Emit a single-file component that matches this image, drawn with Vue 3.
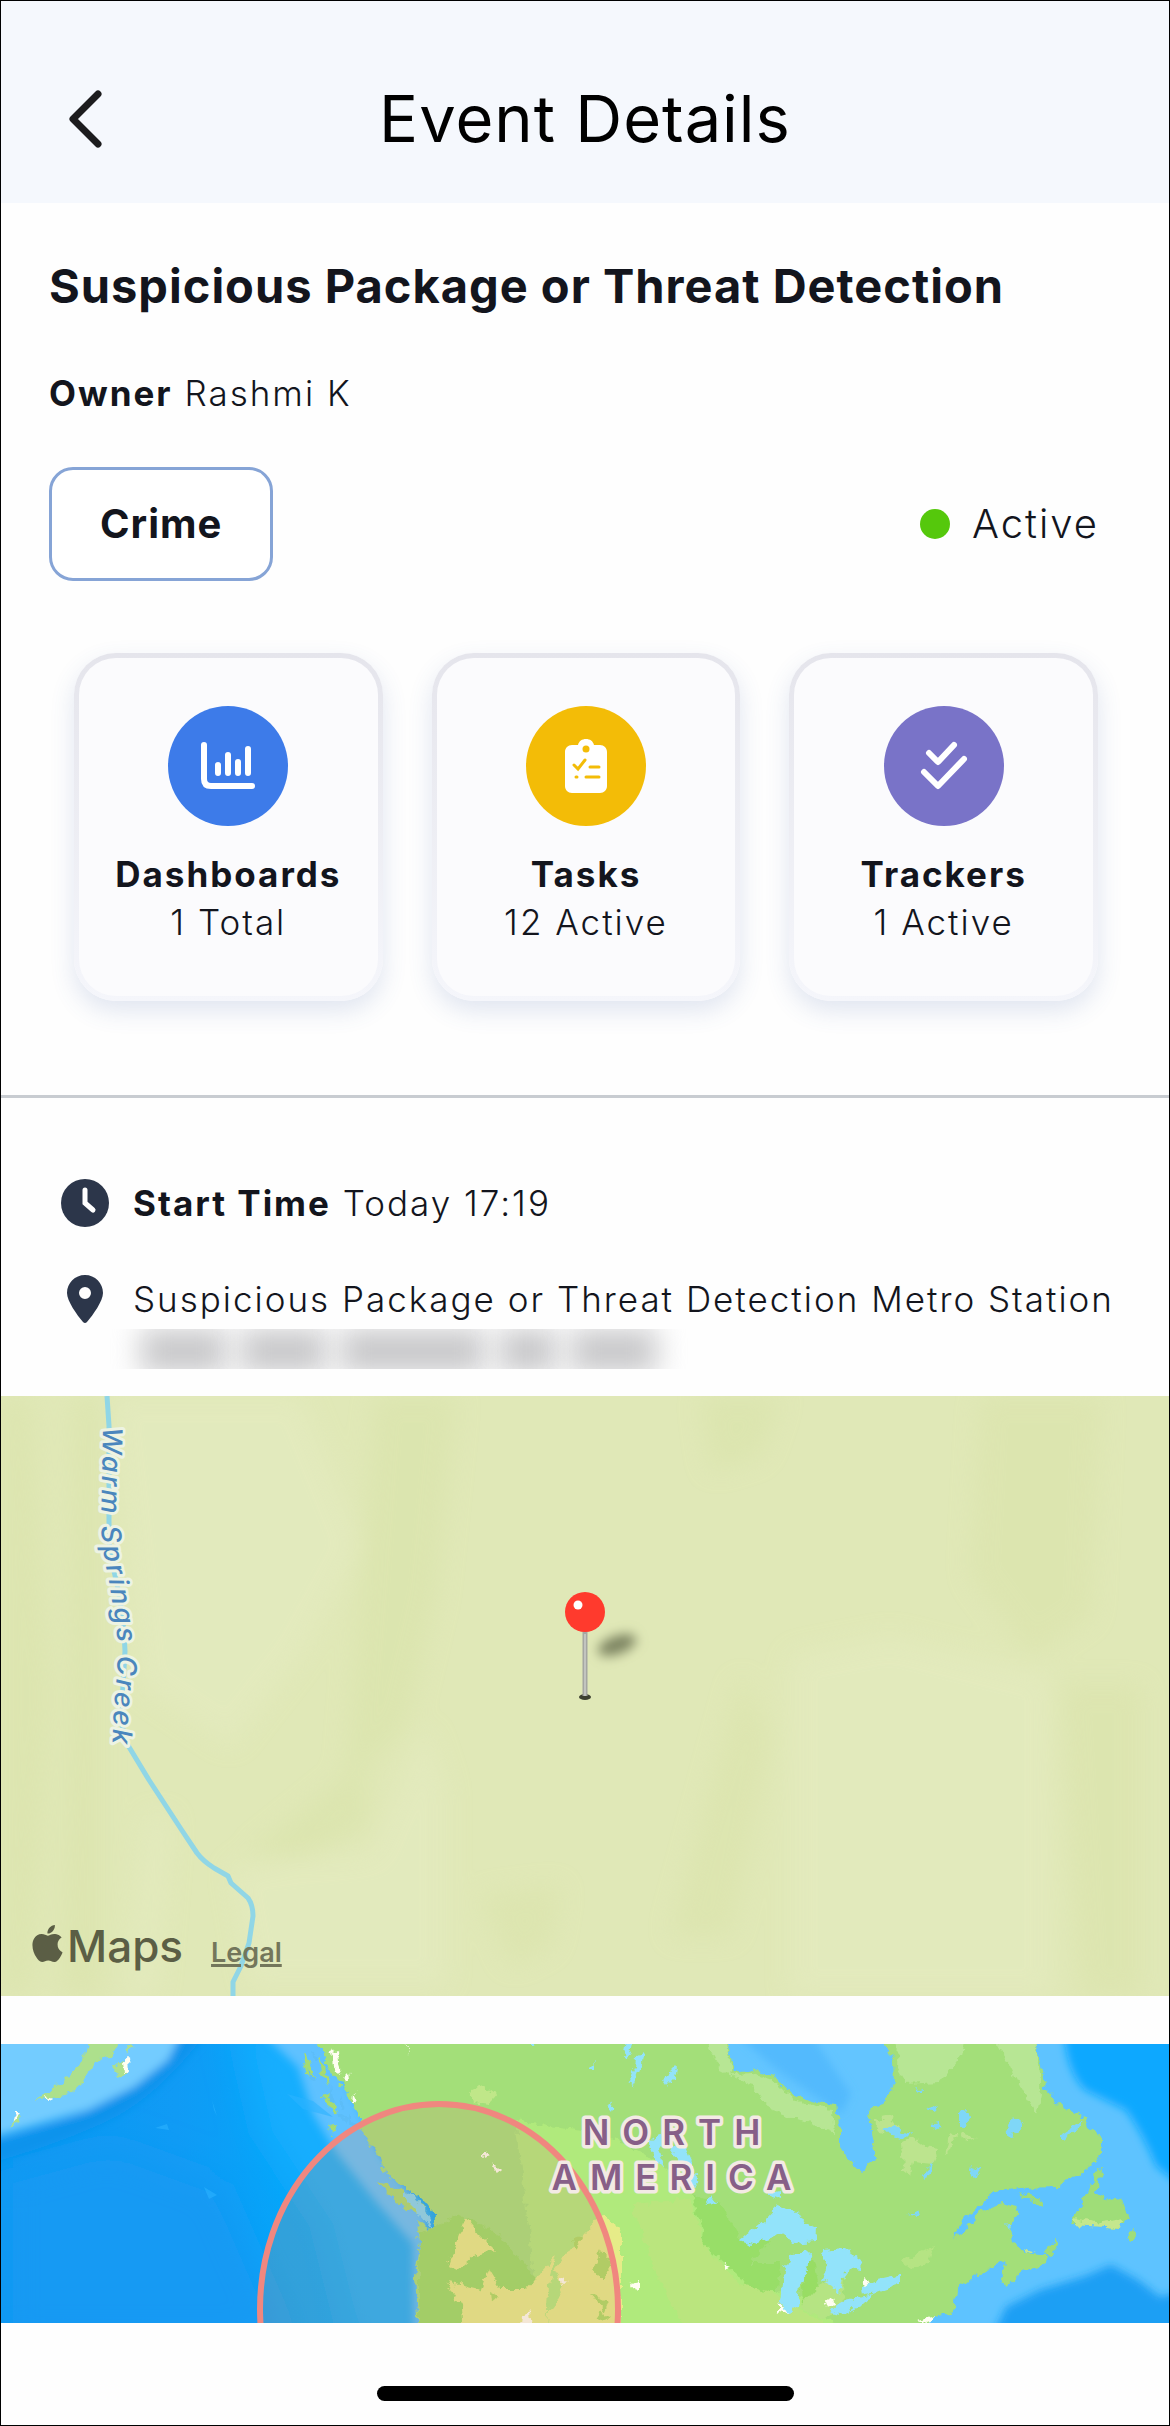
<script setup>
import { ref } from 'vue';

// Event data shown on the page
const event = ref({
  title: 'Suspicious Package or Threat Detection',
  owner: 'Rashmi K',
  category: 'Crime',
  status: 'Active',
  startTime: 'Today 17:19',
  place: 'Suspicious Package or Threat Detection Metro Station',
});

const cards = ref([
  { id: 'dashboards', label: 'Dashboards', count: '1 Total' },
  { id: 'tasks', label: 'Tasks', count: '12 Active' },
  { id: 'trackers', label: 'Trackers', count: '1 Active' },
]);
</script>

<template>
  <div class="page">
    <header class="header">
      <button class="back" type="button" aria-label="Back">
        <svg viewBox="0 0 36 60" width="36" height="60">
          <path d="M31 5 6 30l25 25" />
        </svg>
      </button>
      <h1>Event Details</h1>
    </header>

    <section class="summary">
      <h2>{{ event.title }}</h2>
      <p class="owner"><b>Owner</b> {{ event.owner }}</p>
      <div class="tags">
        <span class="category">{{ event.category }}</span>
        <span class="status"><i class="dot"></i>{{ event.status }}</span>
      </div>
    </section>

    <nav class="cards">
      <button v-for="card in cards" :key="card.id" type="button" class="card">
        <span class="card-icon" :class="card.id">
          <svg v-if="card.id === 'dashboards'" viewBox="0 0 120 120">
            <path class="line" d="M36 39v34q0 7 7 7h41M50 59v8M60 49v18M70 56v11M80 43v24" />
          </svg>
          <svg v-else-if="card.id === 'tasks'" viewBox="0 0 120 120">
            <path
              class="fill"
              d="M46 39h6c1-4 4-6 8-6s7 2 8 6h6c4 0 7 3 7 7v34c0 4-3 7-7 7H46c-4 0-7-3-7-7V46c0-4 3-7 7-7z"
            />
            <circle class="hole" cx="60" cy="43" r="3.5" />
            <path class="cut" d="m48 59 4 4 7-9M64 61h9M60 71h13M50 71h1" />
          </svg>
          <svg v-else viewBox="0 0 120 120">
            <path class="line" d="m45 47 9 9 16-17M40 66l14 14 26-27" />
          </svg>
        </span>
        <b>{{ card.label }}</b>
        <span>{{ card.count }}</span>
      </button>
    </nav>

    <section class="details">
      <div class="row">
        <svg viewBox="0 0 48 48" width="48" height="48">
          <circle cx="24" cy="24" r="24" fill="#2c364a" />
          <path d="M24 11v13l8 7" fill="none" stroke="#fff" stroke-width="5" stroke-linecap="round" />
        </svg>
        <p><b>Start Time</b> {{ event.startTime }}</p>
      </div>
      <div class="row">
        <svg viewBox="0 0 48 48" width="48" height="48">
          <path
            fill="#2c364a"
            fill-rule="evenodd"
            d="M24 0c10 0 18 8 18 18 0 8-10 22-16 29q-2 2-4 0C16 40 6 26 6 18 6 8 14 0 24 0zm0 12a6 6 0 1 0 0 12 6 6 0 0 0 0-12z"
          />
        </svg>
        <p>{{ event.place }}</p>
      </div>
      <!-- address is hidden -->
      <div class="redacted"><i></i><i></i><i></i><i></i><i></i></div>
    </section>

    <div class="map local-map">
      <svg viewBox="0 0 1168 600" preserveAspectRatio="xMidYMid slice">
        <defs>
          <filter id="soft" x="-50%" y="-50%" width="200%" height="200%">
            <feGaussianBlur stdDeviation="12" />
          </filter>
          <filter id="shade" x="-100%" y="-200%" width="300%" height="500%">
            <feGaussianBlur stdDeviation="6" />
          </filter>
        </defs>
        <rect width="1168" height="600" fill="#e0e8b7" />
        <g filter="url(#soft)" opacity=".7">
          <path fill="#dbe4ad" d="M0 0h30l20 300-20 300H0zM75 0h25v600H60z" />
          <path fill="#e4ebc0" d="M110 0h190l60 150-60 110-70 90-90-60zM145 420h25l-15 180h-28z" />
          <path fill="#dae4ac" d="M375 0h80l-20 200-30 130-40 40v60l-60 30-60 0 100-80zM700 0h80l-20 60-50 15z" />
          <path fill="#e4ebc0" d="M425 330l20 60v200H250l-20-120 140-15z" />
          <path fill="#e4ebbf" d="M790 260l100-20 160 40v320H790z" />
          <path fill="#dbe4ad" d="M980 0h120l-10 220-60 40-60-80zM740 280l30 60-40 200h-60zM1060 290h80v310h-60z" />
          <path fill="#dbe4ad" d="M480 500l80-10-10 60-40 20z" />
        </g>
        <path
          class="creek"
          d="M106 0l2 30v100q-1 20 5 45 10 40 11 80l-4 70 5 21 23 38 32 49 16 24q6 8 17 15l14 8 3 7 17 15q5 7 5 18l-4 27-8 23-8 16v14"
        />
        <path id="creek-label" d="M102 31L100 128Q101 155 108 185L116 238Q118 262 113 310L111 360" fill="none" />
        <text class="creek-name">
          <textPath href="#creek-label">Warm Springs Creek</textPath>
        </text>
        <ellipse cx="616" cy="249" rx="20" ry="9" fill="#7c8360" filter="url(#shade)" transform="rotate(-20 616 249)" />
        <ellipse cx="584" cy="301" rx="6" ry="3" fill="#3c4030" />
        <path d="M584 232v68" stroke="#a5a7a2" stroke-width="5" />
        <path d="M584 238v62" stroke="#c2c4bf" stroke-width="2" />
        <circle cx="584" cy="216" r="20" fill="#ff3a2d" />
        <circle cx="577" cy="209" r="4.5" fill="#fff" />
      </svg>
      <div class="attribution">
        <svg viewBox="2 0 20 24" width="31" height="37">
          <path
            d="M12.152 6.896c-.948 0-2.415-1.078-3.96-1.04-2.04.027-3.91 1.183-4.961 3.014-2.117 3.675-.546 9.103 1.519 12.09 1.013 1.454 2.208 3.09 3.792 3.039 1.52-.065 2.09-.987 3.935-.987 1.831 0 2.35.987 3.96.948 1.637-.026 2.676-1.48 3.676-2.948 1.156-1.688 1.636-3.325 1.662-3.415-.039-.013-3.182-1.221-3.22-4.857-.026-3.04 2.48-4.494 2.597-4.559-1.429-2.09-3.623-2.324-4.39-2.376-2-.156-3.675 1.09-4.61 1.09zM15.53 3.83c.843-1.012 1.4-2.427 1.245-3.83-1.207.052-2.662.805-3.532 1.818-.78.896-1.454 2.338-1.273 3.714 1.338.104 2.715-.688 3.559-1.701"
          />
        </svg>
        <span class="maps">Maps</span>
        <a href="#legal">Legal</a>
      </div>
    </div>

    <div class="map world-map">
      <svg viewBox="0 0 1168 279" preserveAspectRatio="xMidYMid slice">
        <defs>
          <linearGradient id="ocean">
            <stop offset="0" stop-color="#0a98f2" />
            <stop offset=".15" stop-color="#109bf5" />
            <stop offset=".24" stop-color="#06a4f9" />
            <stop offset="1" stop-color="#0ea8ff" />
          </linearGradient>
          <filter id="haze" x="-20%" y="-20%" width="140%" height="140%">
            <feGaussianBlur stdDeviation="4" />
          </filter>
          <filter id="deep" x="-20%" y="-20%" width="140%" height="140%">
            <feGaussianBlur stdDeviation="18" />
          </filter>
          <!-- breaks up straight coast lines -->
          <filter id="coast" x="-5%" y="-5%" width="110%" height="110%" color-interpolation-filters="sRGB">
            <feTurbulence type="fractalNoise" baseFrequency=".12" numOctaves="3" seed="4" result="noise" />
            <feDisplacementMap in="SourceGraphic" in2="noise" scale="10" xChannelSelector="R" yChannelSelector="G" />
          </filter>
        </defs>
        <rect width="1168" height="279" fill="url(#ocean)" />

        <!-- sea depth -->
        <g filter="url(#deep)">
          <path fill="#139af3" d="M0 130l110-30 110 40 70 160H0z" />
          <path fill="#17aefe" d="M235-20h90l50 130 60 90 5 100h-90l-30-120-60-90z" />
        </g>
        <g filter="url(#haze)">
          <path fill="none" stroke="#0893ec" stroke-width="18" d="M-10 110q70-20 115-42t90-80" />
          <path fill="#73ccff" d="M-10-10H180L167 16 133 43 87 66-10 94z" />
          <path fill="#5fc1ff" d="M262-10H325L380 110 425 170 424 300H413L412 200 375 158 335 108 312 70 297 23z" />
        </g>
        <path fill="#63c5ff" d="M715-10H910V140H715z" />
        <path fill="#52bafd" d="M735-10H810L850 50 840 70 775 25z" filter="url(#haze)" />
        <path fill="#5ec3ff" d="M920 279V180L1020 120 1020-10H1180V279z" />
        <g filter="url(#haze)">
          <path fill="#11a8ff" d="M1063-10Q1066 28 1084 46L1125 66Q1142 90 1155 122L1190 150V-20z" />
          <path fill="#1a9ff4" d="M990 295L1005 263 1039 246 1085 232 1110 221 1137 236 1159 253 1190 245V300z" />
        </g>
        <path fill="#2cb3ff" opacity=".6" d="M286 50l26 7 20 16-30-8zM213 66l-2-10 5 16zM154 84l14 2-2-6zM208 155l-5-12 13 8zM228 45l-5-6 8 10z" />

        <g filter="url(#coast)">
          <!-- Aleutians -->
          <path fill="#ade08c" d="M87-6H120L110 10 95 19 84 36 72 48 52 53 33 57 52 46 66 33 82 16zM112 24l10-8 4 12-10 6zM10 84l6-12 5 1zM126 3l9 1-8 6z" />
          <!-- mainland -->
          <path
            fill="#a3df79"
            d="M313-10L322 10 330 29 340 40 348 50 352 62 359 73 358 84 368 98 378 113 384 129 405 144 424 158 435 173 433 188 416 177 418 199 414 233 416 259 418 290H925L930 274 954 268 952 259 956 243 979 229 1005 216 1001 230 1005 243 1020 229 1045 219 1047 212 1024 209 1013 199 1011 183 1016 164 1001 158 979 168 964 186 952 195 964 173 986 156 990 148 1020 144 1058 143 1073 133 1092 121 1101 113 1101 93 1088 83 1084 74 1062 63 1043 43 1041 26 1031-10H872L886 3 892 16 893 39 886 56 867 68 869 89 875 116 860 128 850 118 839 101 839 86 835 61 813 59 790 49 775 33 752 26 734 29 728 0V-10z"
          />
          <path fill="#a6dc70" d="M378 137l24 9 20 16 4 9-20-6-20-16zM328 82l8-2 1 8-7 2zM322 52l7-3 6 20-8-5zM300 8l8 8 6 20-9-6zM318 12l6 10 4 20-7-12z" />
          <path fill="#9fdd78" d="M1097 124L1102 126 1095 149 1104 153 1120 155 1127 173 1118 184 1069 180 1080 159 1088 146zM1020 148l20 8 2 6-16-6zM1054 195l3 2-8 14-4-2zM1126 188l8-4 2 8-7 5z" />
          <path fill="#c5e78d" d="M1072 174l28 5 22-3-2 8-48-3zM1022 204l13 4-10 1z" />

          <!-- land tints -->
          <path fill="#b7e694" d="M897-10H965L960 12 940 38 905 40 896 24zM990-10H1033L1038 28 1040 52 1036 70 1018 40 1008 20zM702-10H726L732 31 752 30 775 38 790 53 813 64 832 66 834 90 805 78 770 66 750 40 720 26z" />
          <path fill="#98de68" d="M690 150l30 10 20 35 30 0-20 24 30 0-5 30-37 0-45-35-20-40z" />
          <path fill="#b0ea7c" d="M514 76L560 84 602 90 640 108 665 124 690 146 695 166 703 184 700 198 722 218 736 230 748 248 775 248 790 246 845 290H540z" />
          <path fill="#bae57e" d="M630 160L688 155 700 185V198L738 240 775 250 845 292H690L660 240z" />
          <path fill="#98dd64" d="M418 190l40-20 40 20 50 60-30 45H418zM800 224l12-10 6 28-16 20z" />
          <path fill="#b5e483" d="M900 217l33-15-6 18-24 4zM800 262l11-12 18-20 14 6-2 26-20 14z" />
          <path fill="#bce48e" d="M900 100l12-6 12 10 14 2-6 14-20-2-2 12-8-6zM872 76l18-4 8 10-16 8zM960 88l14 6-10 4zM944 110l5-22 8 4z" />
          <path fill="#c0e789" d="M470 48l14-6 12 8-8 10-16-2z" />

          <!-- drylands -->
          <path fill="#e6ec88" d="M464 173L478 190 494 206 472 212 456 226 448 222 456 196zM446 238L480 246 488 224 500 244 526 244 556 210 548 240 546 295H462L460 262zM568 206L600 172 620 185V295H546L548 266 562 248 554 226z" />
          <path fill="#a9dc62" d="M600 206l10 12-8 20-10-14zM590 250l18 8-4 10zM600 266l10 8-14 4zM488 248l8 4-7 6zM570 196l12-2-6 12z" />

          <!-- lakes -->
          <g fill="#92e3fa">
            <path d="M739 196l25-20 13-14 21 6 4 10 14 6-1 14-24 2-8-12-16 6-16 6z" />
            <path d="M812 208l-22 2-7 17-2 23-2 14 6 6 12-7 2-24 8-17zM820 206l24-2 17 12-1 11-12-2-6 8-3 18-8-10-11-6 6-12z" />
            <path d="M828 268l16-12 26-6-4 8-26 12zM862 242l12-5 25-6v9l-22 8-14 2z" />
            <path d="M647 98l14-10 2 12 20 1 10 22 2 22-6-4-10-24-10-15-12 2 5 20-6-6zM704 162l6-12 7 10zM768 148l10-2v10l-10-4z" />
            <path d="M625-4l6 2-4 18-4-8zM635 12l8-2-3 12-8 20-4-2 6-16zM662 36l14-14-2 12-8 8zM587 26l8-8v8zM606 62l7-4-2 10zM528-2l8 0-4 5z" />
          </g>
          <g fill="#7fd7f7">
            <path d="M883 86l12-6 4 10 14-4-10 10-10-4zM958 70l8-3 4 8-8 10-4-6zM1004 88l8-14 10 4-4 8-12 8zM930 80l8-2 2 6-6 3zM926 64l12-4-4 8zM914 44l8 2-2 4zM920 130l12-12-8 20zM968 122l10 4-4 10zM906 170l10-3 2 4zM1004 178l8 4-4 4z" />
            <path d="M1060 90l22-14-6 12-16 6zM404 148l8 4 12 14 8 20-12-14-16-16z" />
          </g>
          <g fill="#5cbdf8">
            <path d="M330 40l4 20-6-4zM338 50l6 14-4 4zM336 70l12 4-4 6zM346 66l8 18-6-4zM306 24l10 14-6-2zM312 6l6 10-4 2z" />
          </g>
          <g fill="#fffef2">
            <path d="M329 10l7-4 1 12 4 12-6-2zM342 34l6-6 1 8-5 4zM404-4l6 14-5-8zM353 48l3 12-4 2zM121 18l6-4 1 12-6 2zM12 68l8 2-6 6zM44 52l10 2-8 2z" />
            <path d="M484 106l4 6-4 2zM492 118l8 8-4 2-6-6zM520 272l10-4 2 20h-14zM560 234l7 2-8 4zM722 218l8 4-6 4zM824 258l8-3 2 6-8 3zM778 258l8 12-8-2zM862 234l8 4-6 4zM630 240l8-2v8l-6-2zM916 276l18-4-6 8z" />
          </g>
        </g>

        <ellipse class="range" cx="438" cy="265" rx="179" ry="205" />
        <text class="region" x="677" y="101">NORTH</text>
        <text class="region" x="677" y="146">AMERICA</text>
      </svg>
    </div>

    <footer class="footer"><div class="home-bar"></div></footer>
  </div>
</template>

<style>
body {
  margin: 0;
  background: #fff;
}
</style>

<style scoped>
.page {
  box-sizing: border-box;
  min-height: 100vh;
  border: 1px solid #000;
  background: #fefefe;
  color: #13151d;
  font-family: Inter, "Liberation Sans", sans-serif;
  font-size: 35px;
  font-weight: 300;
  line-height: 48px;
  letter-spacing: 2px;
}

h1,
h2,
p {
  margin: 0;
}

b {
  font-weight: 700;
}

button {
  font: inherit;
  color: inherit;
  letter-spacing: inherit;
  cursor: pointer;
}

/*---------------- HEADER ----------- */
.header {
  display: grid;
  grid-template-columns: 140px 1fr 140px;
  align-items: center;
  padding: 78px 0 44px;
  background: #f5f8fd;
}

.back {
  display: flex;
  justify-content: flex-end;
  width: 102px;
  padding: 0;
  border: none;
  background: none;
}

.back path {
  fill: none;
  stroke: #1c1c1e;
  stroke-width: 7;
  stroke-linecap: round;
  stroke-linejoin: round;
}

.header h1 {
  color: #000;
  font-size: 65px;
  font-weight: 400;
  line-height: 80px;
  letter-spacing: 1px;
  text-align: center;
}

/*---------------- SUMMARY ----------- */
.summary {
  padding: 53px 70px 0 48px;
}

.summary h2 {
  font-size: 47px;
  font-weight: 700;
  line-height: 60px;
  letter-spacing: 1px;
}

.owner {
  margin-top: 53px;
}

.tags {
  display: flex;
  align-items: center;
  justify-content: space-between;
  margin-top: 50px;
  font-size: 40px;
}

.category {
  padding: 30px 48px;
  border: 3px solid #86a4d6;
  border-radius: 24px;
  font-weight: 700;
  letter-spacing: 1px;
  background: #fff;
}

.status {
  display: flex;
  align-items: center;
  gap: 22px;
}

.dot {
  width: 30px;
  height: 30px;
  border-radius: 50%;
  background: #55c80c;
}

/*---------------- CARDS ----------- */
.cards {
  display: grid;
  grid-template-columns: repeat(3, 1fr);
  gap: 49px;
  padding: 72px 71px 94px 73px;
  border-bottom: 3px solid #c8ccd1;
}

.card {
  display: flex;
  flex-direction: column;
  align-items: center;
  padding: 48px 0 50px;
  border: 5px solid transparent;
  border-radius: 42px;
  background:
    linear-gradient(#fbfbfd, #fbfbfd) padding-box,
    linear-gradient(#e5e5ec, #f5f6fb) border-box;
  box-shadow: 0 10px 24px rgba(70, 100, 170, 0.16);
}

.card-icon {
  width: 120px;
  height: 120px;
  margin-bottom: 24px;
  border-radius: 50%;
}

.card-icon svg {
  display: block;
}

.dashboards {
  background: #3d7be9;
}

.tasks {
  background: #f3bc07;
}

.trackers {
  background: #7973c8;
}

.line {
  fill: none;
  stroke: #fff;
  stroke-width: 6;
  stroke-linecap: round;
  stroke-linejoin: round;
}

.fill {
  fill: #fff;
}

.hole {
  fill: #f3bc07;
}

.cut {
  fill: none;
  stroke: #f3bc07;
  stroke-width: 3;
  stroke-linecap: round;
}

/*---------------- DETAILS ----------- */
.details {
  padding: 81px 40px 27px 60px;
}

.row {
  display: flex;
  align-items: center;
  gap: 24px;
}

.row svg {
  flex: none;
}

.row + .row {
  margin-top: 48px;
}

.redacted {
  display: flex;
  gap: 14px;
  height: 40px;
  margin-top: 6px;
  padding-left: 80px;
  overflow: hidden;
}

.redacted i {
  width: 86px;
  height: 44px;
  background: #c8c8ca;
  filter: blur(14px);
}

.redacted i:nth-child(3) {
  width: 144px;
}

.redacted i:nth-child(4) {
  width: 58px;
}

/*---------------- MAPS ----------- */
.map {
  position: relative;
  overflow: hidden;
}

.map > svg {
  display: block;
  width: 100%;
  height: 100%;
}

.local-map {
  height: 600px;
}

.world-map {
  height: 279px;
  margin-top: 48px;
}

.creek {
  fill: none;
  stroke: #90d6e6;
  stroke-width: 5;
  stroke-linejoin: round;
}

.creek-name {
  fill: #4a86bd;
  stroke: #edf3e3;
  stroke-width: 6px;
  stroke-linejoin: round;
  paint-order: stroke;
  font-size: 27px;
  font-style: italic;
  font-weight: 500;
  letter-spacing: 3px;
}

.attribution {
  position: absolute;
  bottom: 19px;
  left: 31px;
  display: flex;
  align-items: baseline;
  color: #5b5e45;
  letter-spacing: 0;
}

.attribution svg {
  margin-right: 4px;
  fill: currentColor;
}

.maps {
  font-size: 44px;
  font-weight: 500;
}

.attribution a {
  margin-left: 28px;
  color: #73765b;
  font-size: 27px;
  font-weight: 600;
  text-decoration-thickness: 3px;
}

.range {
  fill: rgba(205, 150, 115, 0.22);
  stroke: #f0877f;
  stroke-width: 6;
}

.region {
  fill: #875f88;
  stroke: #f3eae4;
  stroke-width: 7px;
  stroke-linejoin: round;
  paint-order: stroke;
  font-size: 35px;
  font-weight: 600;
  letter-spacing: 13px;
  text-anchor: middle;
}

/*---------------- HOME BAR ----------- */
.footer {
  padding: 63px 0 24px;
}

.home-bar {
  width: 417px;
  height: 15px;
  margin: 0 auto;
  border-radius: 8px;
  background: #000;
}
</style>
